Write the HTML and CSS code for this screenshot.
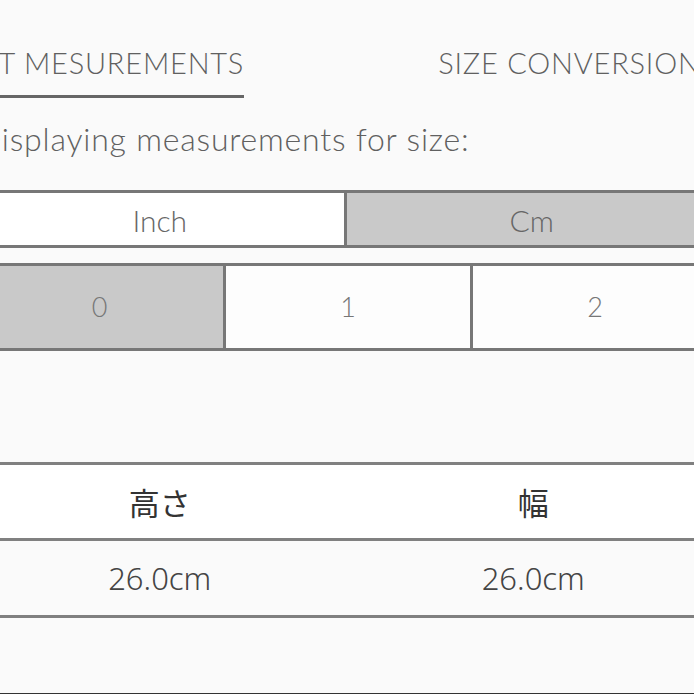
FILE: index.html
```html
<!DOCTYPE html>
<html lang="ja">
<head>
<meta charset="utf-8">
<title>Size guide</title>
<link rel="stylesheet" href="styles.css">
</head>
<body>
<div class="page">
  <nav class="tabs">
    <div class="tab tab-active">FIT MESUREMENTS</div>
    <div class="tab">SIZE CONVERSION</div>
  </nav>
  <p class="subtitle">Displaying measurements for size:</p>
  <div class="units">
    <div class="unit unit-inch">Inch</div>
    <div class="unit unit-selected">Cm</div>
  </div>
  <div class="sizes">
    <div class="size size-selected">0</div>
    <div class="size">1</div>
    <div class="size">2</div>
  </div>
  <div class="measure">
    <div class="measure-row measure-head">
      <div class="measure-cell">高さ</div>
      <div class="measure-cell">幅</div>
    </div>
    <div class="measure-row">
      <div class="measure-cell">26.0cm</div>
      <div class="measure-cell">26.0cm</div>
    </div>
  </div>
</div>
</body>
</html>
```
FILE: styles.css
```css
html, body {
  margin: 0;
  padding: 0;
}
body {
  background: #fafafa;
  overflow: hidden;
  height: 694px;
  box-sizing: border-box;
  border-bottom: 1px solid #333;
  font-family: Lato, "Open Sans", sans-serif;
}
.page {
  margin-left: -27px;
  width: 747px;
}
.tabs {
  display: flex;
  padding-top: 45px;
  padding-left: 0;
  gap: 194px;
  white-space: nowrap;
}
.tab {
  font-weight: 300;
  font-size: 29px;
  line-height: 35px;
  letter-spacing: 0.8px;
  color: #606060;
  padding-bottom: 15px;
  border-bottom: 3px solid transparent;
}
.tab-active {
  border-bottom-color: #666;
}
.subtitle {
  margin: 23px 0 0 4px;
  font-weight: 300;
  font-size: 32px;
  line-height: 36px;
  letter-spacing: 0.8px;
  color: #606060;
  white-space: nowrap;
}
.units {
  margin-top: 33px;
  display: grid;
  grid-template-columns: 1fr 1fr;
  border: 3px solid #777;
}
.unit {
  text-align: center;
  font-weight: 300;
  font-size: 30px;
  line-height: 50px;
  padding-top: 2px;
  color: #666;
  background: #fff;
}
.unit-inch {
  border-right: 3px solid #777;
}
.unit-selected {
  background: #c9c9c9;
}
.sizes {
  margin-top: 15px;
  display: grid;
  grid-template-columns: repeat(3, 1fr);
  border: 3px solid #777;
}
.size {
  text-align: center;
  font-weight: 300;
  font-size: 27px;
  line-height: 82px;
  color: #777;
  background: #fdfdfd;
}
.size + .size {
  border-left: 3px solid #777;
}
.size-selected {
  background: #c9c9c9;
}
.measure {
  margin-top: 111px;
  border-top: 3px solid #808080;
}
.measure-row {
  display: grid;
  grid-template-columns: 1fr 1fr;
  border-bottom: 3px solid #808080;
  height: 74px;
  align-items: center;
  background: #fafafa;
}
.measure-head {
  height: 73px;
  background: #fff;
}
.measure-cell {
  text-align: center;
  font-family: "Noto Sans", "Noto Sans CJK JP", sans-serif;
  font-weight: 300;
  font-size: 31px;
  color: #444;
}
.measure-head .measure-cell {
  font-family: "Noto Sans CJK JP", sans-serif;
  font-weight: 400;
  color: #333;
}
```
